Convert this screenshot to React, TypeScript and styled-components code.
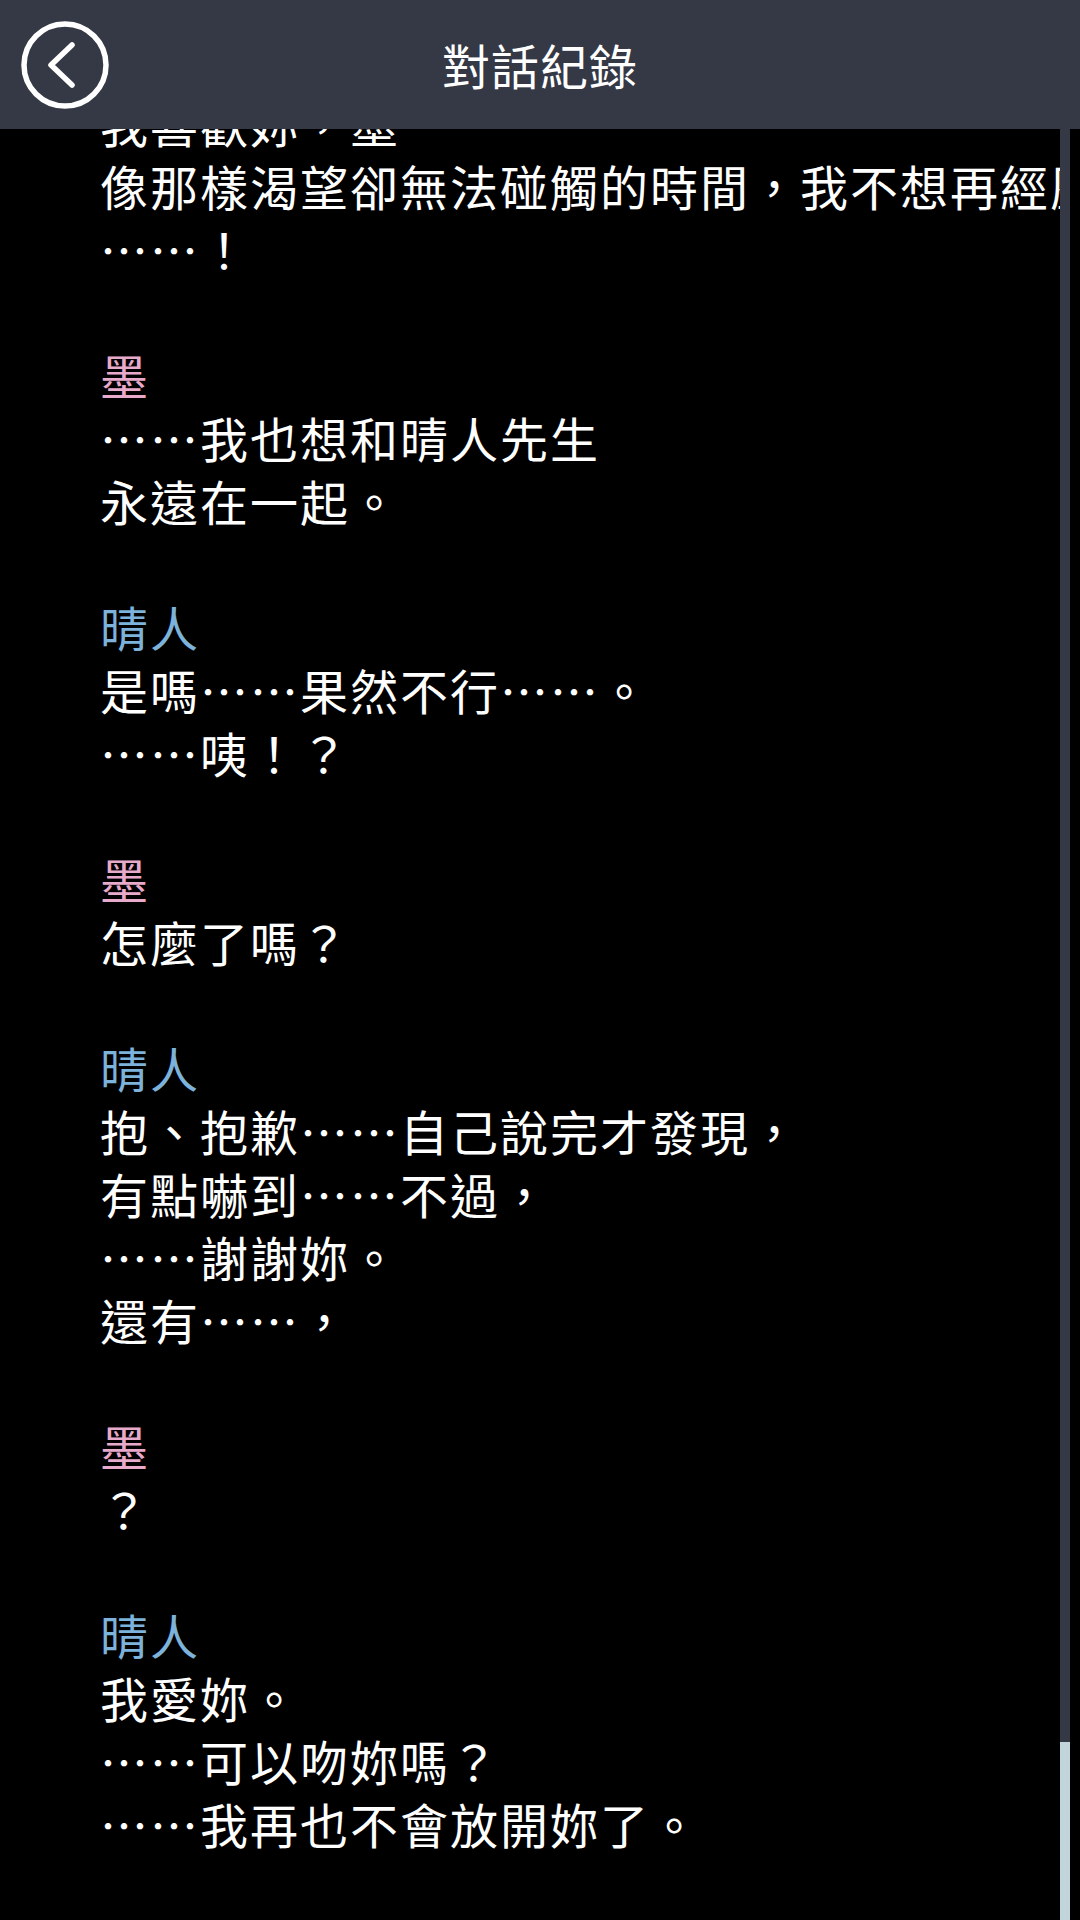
import React from "react";
import styled, { createGlobalStyle } from "styled-components";

type Speaker = "mo" | "haruto";
type Entry = { speaker: Speaker; lines: string[] };

const names: Record<Speaker, string> = { mo: "墨", haruto: "晴人" };
const nameColors: Record<Speaker, string> = {
  mo: "#e8aacb",
  haruto: "#7db2db",
};

const log: Entry[] = [
  { speaker: "mo", lines: ["晴人先生……？"] },
  {
    speaker: "haruto",
    lines: [
      "我喜歡妳，墨",
      "像那樣渴望卻無法碰觸的時間，我不想再經歷了。",
      "……！",
    ],
  },
  { speaker: "mo", lines: ["……我也想和晴人先生", "永遠在一起。"] },
  { speaker: "haruto", lines: ["是嗎……果然不行……。", "……咦！？"] },
  { speaker: "mo", lines: ["怎麼了嗎？"] },
  {
    speaker: "haruto",
    lines: [
      "抱、抱歉……自己說完才發現，",
      "有點嚇到……不過，",
      "……謝謝妳。",
      "還有……，",
    ],
  },
  { speaker: "mo", lines: ["？"] },
  {
    speaker: "haruto",
    lines: ["我愛妳。", "……可以吻妳嗎？", "……我再也不會放開妳了。"],
  },
];

const GlobalStyle = createGlobalStyle`
  html, body {
    margin: 0;
    padding: 0;
    background: #000;
  }
  body {
    font-family: "Noto Sans CJK TC", "Noto Sans", sans-serif;
  }
`;

const Screen = styled.div`
  width: 1080px;
  height: 1920px;
  display: flex;
  flex-direction: column;
  background: #000;
  overflow: hidden;
`;

const Header = styled.header`
  height: 129px;
  flex-shrink: 0;
  background: #353845;
  display: grid;
  grid-template-columns: 130px 1fr 130px;
  align-items: center;
`;

const BackButton = styled.button`
  width: 130px;
  height: 129px;
  padding: 0;
  border: none;
  background: transparent;
  display: flex;
  align-items: center;
  justify-content: center;
`;

const Title = styled.h1`
  margin: 0;
  text-align: center;
  color: #fff;
  font-size: 48px;
  font-weight: 400;
  line-height: 129px;
  letter-spacing: 1px;
`;

const Body = styled.div`
  flex: 1;
  min-height: 0;
  display: flex;
`;

const Viewport = styled.div`
  flex: 1;
  min-width: 0;
  display: flex;
  flex-direction: column;
  justify-content: flex-end;
  overflow: hidden;
`;

const Log = styled.div`
  flex-shrink: 0;
  padding: 0 0 65px 100px;
  display: flex;
  flex-direction: column;
  gap: 63px;
  font-size: 48px;
  line-height: 63px;
  letter-spacing: 2px;
  color: #fff;
  white-space: nowrap;
`;

const Block = styled.section`
  display: flex;
  flex-direction: column;
`;

const Name = styled.div<{ $speaker: Speaker }>`
  color: ${(p) => nameColors[p.$speaker]};
`;

const Line = styled.div`
  color: #fff;
`;

const Track = styled.div`
  width: 10px;
  margin-right: 10px;
  flex-shrink: 0;
  background: #353845;
  display: flex;
  flex-direction: column;
  justify-content: flex-end;
`;

const Thumb = styled.div`
  height: 178px;
  background: #c1d5da;
`;

function BackIcon() {
  return (
    <svg width="88" height="88" viewBox="0 0 88 88" fill="none">
      <circle cx="44" cy="44" r="41" stroke="#fff" strokeWidth="5.5" />
      <path
        d="M51 24 L30 44 L51 64"
        stroke="#fff"
        strokeWidth="5.5"
        strokeLinecap="round"
        strokeLinejoin="round"
      />
    </svg>
  );
}

export default function App() {
  return (
    <Screen lang="zh-Hant">
      <GlobalStyle />
      <Header>
        <BackButton aria-label="返回">
          <BackIcon />
        </BackButton>
        <Title>對話紀錄</Title>
        <div />
      </Header>
      <Body>
        <Viewport>
          <Log>
            {log.map((entry, i) => (
              <Block key={i}>
                <Name $speaker={entry.speaker}>{names[entry.speaker]}</Name>
                {entry.lines.map((line, j) => (
                  <Line key={j}>{line}</Line>
                ))}
              </Block>
            ))}
          </Log>
        </Viewport>
        <Track>
          <Thumb />
        </Track>
      </Body>
    </Screen>
  );
}
